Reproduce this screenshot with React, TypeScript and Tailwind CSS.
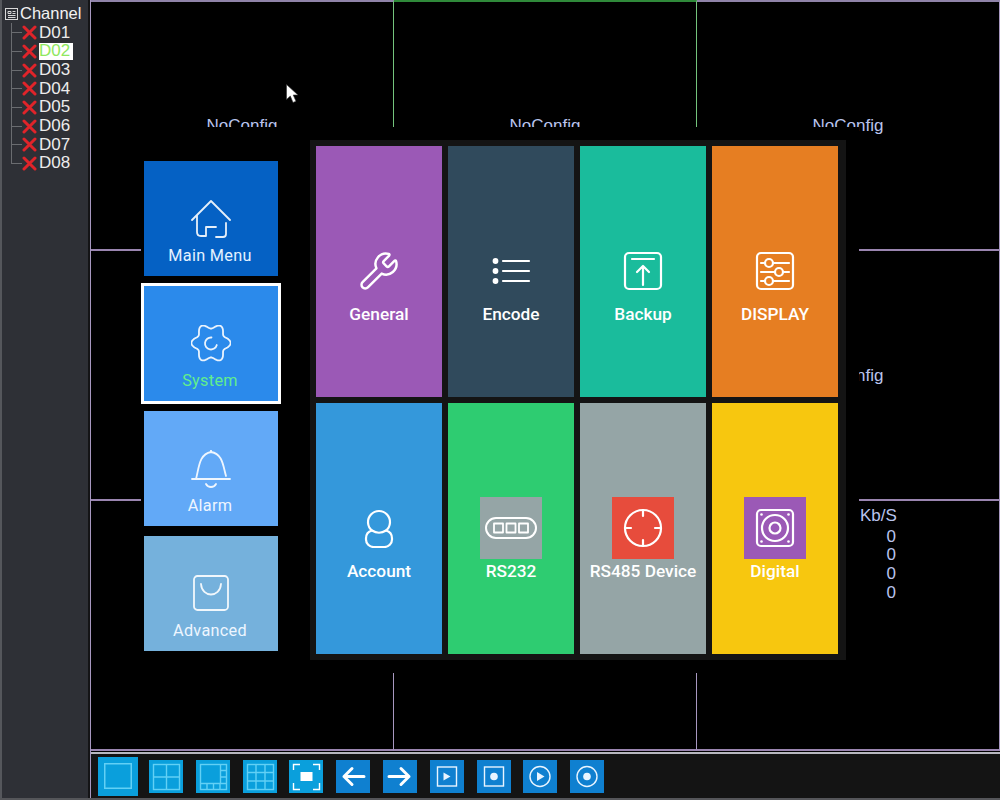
import { Wrench } from "lucide-react";
import type { ReactNode } from "react";

const channels = ["D01", "D02", "D03", "D04", "D05", "D06", "D07", "D08"];

const gearPoints = Array.from({ length: 120 }, (_, i) => {
  const a = (i / 120) * Math.PI * 2;
  const r = 17 + 2.6 * Math.cos(6 * a);
  return `${(20 + r * Math.cos(a)).toFixed(2)},${(18 + r * Math.sin(a)).toFixed(2)}`;
}).join(" ");

const Ico = ({ children, sw = 2.2 }: { children: ReactNode; sw?: number }) => (
  <svg width="40" height="40" viewBox="0 0 40 40" fill="none" stroke="currentColor" strokeWidth={sw} strokeLinecap="round" strokeLinejoin="round">
    {children}
  </svg>
);

const Box62 = ({ children }: { children: ReactNode }) => (
  <svg width="62" height="62" viewBox="0 0 62 62" fill="none" stroke="currentColor" strokeWidth="2.2" strokeLinecap="round" strokeLinejoin="round">
    {children}
  </svg>
);

const sideTiles = [
  {
    label: "Main Menu",
    bg: "bg-[#0561c4]",
    border: "border-transparent",
    text: "text-[#e4f2ff]",
    icon: (
      <Ico sw={1.8}>
        <path d="M1 20 20 1l19 19M6 15v17q0 4 4 4h5V27h10M25 37h7q3 0 3-3V23" />
      </Ico>
    ),
  },
  {
    label: "System",
    bg: "bg-[#2b8aeb]",
    border: "border-white",
    text: "text-[#62ee8c]",
    icon: (
      <Ico sw={1.8}>
        <polygon points={gearPoints} />
        <path d="M20.500 12.500a6 6 0 1 0 5.300 7.500" />
      </Ico>
    ),
  },
  {
    label: "Alarm",
    bg: "bg-[#62a9f7]",
    border: "border-transparent",
    text: "text-[#eef6ff]",
    icon: (
      <Ico sw={1.8}>
        <path d="M1 29h38M5 29C8 18 8 4 20 2c12 2 12 14 15 24M20 0v2M15 34c2 4 8 4 10 0" />
      </Ico>
    ),
  },
  {
    label: "Advanced",
    bg: "bg-[#75b1dc]",
    border: "border-transparent",
    text: "text-[#eef6ff]",
    icon: (
      <Ico sw={1.8}>
        <rect x="3" y="1" width="34" height="34" rx="3.500" />
        <path d="M10 9c1 14 19 14 20 0" />
      </Ico>
    ),
  },
];

const gridTiles = [
  {
    label: "General",
    bg: "bg-[#9b59b6]",
    icon: <Wrench size={42} strokeWidth={1.4} />,
  },
  {
    label: "Encode",
    bg: "bg-[#304a5c]",
    icon: (
      <Ico>
        <path d="M12 10h26M12 20h26M12 30h26" />
        <circle cx="4.500" cy="10" r="1.800" fill="currentColor" />
        <circle cx="4.500" cy="20" r="1.800" fill="currentColor" />
        <circle cx="4.500" cy="30" r="1.800" fill="currentColor" />
      </Ico>
    ),
  },
  {
    label: "Backup",
    bg: "bg-[#1abc9c]",
    icon: (
      <Ico>
        <rect x="2" y="2" width="36" height="36" rx="4" />
        <path d="M9 8h22M20 34V15M14 21l6-6 6 6" />
      </Ico>
    ),
  },
  {
    label: "DISPLAY",
    bg: "bg-[#e67e22]",
    icon: (
      <Ico>
        <rect x="2" y="2" width="36" height="36" rx="4" />
        <path d="M18 12h16M6 21h14M28 21h6M18 30h16" />
        <circle cx="14" cy="12" r="4" />
        <circle cx="24" cy="21" r="4" />
        <circle cx="14" cy="30" r="4" />
        <path d="M6 12h4M6 30h4" />
      </Ico>
    ),
  },
  {
    label: "Account",
    bg: "bg-[#3498db]",
    icon: (
      <Ico>
        <path d="M13 22.500a11 11 0 1 1 14 0" />
        <path d="M13 22.500q7 4.500 14 0 6 1.500 6 8v1a7.500 7.500 0 0 1-7.500 7.500h-11A7.500 7.500 0 0 1 7 31.500v-1q0-6.500 6-8z" />
      </Ico>
    ),
  },
  {
    label: "RS232",
    bg: "bg-[#2ecc71]",
    square: "bg-[#95a5a6]",
    icon: (
      <Box62>
        <rect x="6" y="21" width="50" height="20" rx="10" strokeWidth="2" />
        <rect x="14" y="26.500" width="9" height="9" strokeWidth="1.800" />
        <rect x="26.500" y="26.500" width="9" height="9" strokeWidth="1.800" />
        <rect x="39" y="26.500" width="9" height="9" strokeWidth="1.800" />
      </Box62>
    ),
  },
  {
    label: "RS485 Device",
    bg: "bg-[#95a5a6]",
    square: "bg-[#e74c3c]",
    icon: (
      <Box62>
        <circle cx="31" cy="31" r="18" />
        <path d="M31 13v6M31 43v6M13 31h6M43 31h6" />
      </Box62>
    ),
  },
  {
    label: "Digital",
    bg: "bg-[#f7c70f]",
    square: "bg-[#9b59b6]",
    icon: (
      <Box62>
        <rect x="13" y="13" width="36" height="36" rx="4" />
        <circle cx="31" cy="31" r="13" />
        <circle cx="31" cy="31" r="5.500" />
        <g fill="currentColor" stroke="none">
          <circle cx="17.500" cy="17.500" r="1.300" />
          <circle cx="44.500" cy="17.500" r="1.300" />
          <circle cx="17.500" cy="44.500" r="1.300" />
          <circle cx="44.500" cy="44.500" r="1.300" />
        </g>
      </Box62>
    ),
  },
];

const Tool = ({ children }: { children: ReactNode }) => (
  <svg width="34" height="33" viewBox="0 0 34 33" fill="none" stroke="currentColor" strokeWidth="1.400">
    {children}
  </svg>
);

const layoutTools = [
  <Tool key="2x2">
    <rect x="4.500" y="4.500" width="26" height="25" />
    <path d="M17.500 4.500v25M4.500 17h26" />
  </Tool>,
  <Tool key="1+7">
    <rect x="4.500" y="4.500" width="26" height="25" />
    <path d="M24.500 4.500v19M4.500 23.500h26M24.500 10.500h6M24.500 17h6M11 23.500v6M17.500 23.500v6M24 23.500v6" />
  </Tool>,
  <Tool key="3x3">
    <rect x="4.500" y="4.500" width="26" height="25" />
    <path d="M13 4.500v25M22 4.500v25M4.500 12.500h26M4.500 21h26" />
  </Tool>,
  <Tool key="full">
    <path d="M4.500 10V4.500H11M24 4.500h6.500V10M4.500 23v6.500H11M24 29.500h6.500V23" />
    <rect x="11.500" y="12" width="12" height="9" fill="currentColor" stroke="none" />
  </Tool>,
];

const playTools = [
  <Tool key="prev">
    <path d="M28 16.500H8M16 8.500l-8 8 8 8" stroke="white" strokeWidth="3" strokeLinecap="round" strokeLinejoin="round" />
  </Tool>,
  <Tool key="next">
    <path d="M6 16.500h20M18 8.500l8 8-8 8" stroke="white" strokeWidth="3" strokeLinecap="round" strokeLinejoin="round" />
  </Tool>,
  <Tool key="play-box">
    <rect x="7.500" y="7" width="19" height="19" />
    <path d="M13.500 12.500v8l7-4z" fill="currentColor" stroke="none" />
  </Tool>,
  <Tool key="rec-box">
    <rect x="7.500" y="7" width="19" height="19" />
    <circle cx="17" cy="16.500" r="3.800" fill="currentColor" stroke="none" />
  </Tool>,
  <Tool key="play-circle">
    <circle cx="17" cy="16.500" r="10" />
    <path d="M14 12v9l7.500-4.500z" fill="currentColor" stroke="none" />
  </Tool>,
  <Tool key="rec-circle">
    <circle cx="17" cy="16.500" r="10" />
    <circle cx="17" cy="16.500" r="3.800" fill="currentColor" stroke="none" />
  </Tool>,
];

const cellBorders = [
  "border-t-2 border-t-[#8f83a8] border-r border-r-[#74c47c] border-b-2 border-b-[#9a85b0]",
  "border-t-2 border-t-[#2f8a3a] border-r border-r-[#74c47c] border-b-2 border-b-[#2f8a3a]",
  "border-t-2 border-t-[#8f83a8] border-r border-r-[#a798c0] border-b-2 border-b-[#9a85b0]",
];

const App = () => {
  return (
    <div className="relative flex h-[800px] w-[1000px] overflow-hidden bg-[#55565a] font-['Liberation_Sans',sans-serif] text-white">
      <aside className="h-[798px] w-[90px] border-x-2 border-l-[#55575c] border-r-[#141416] bg-[#2e3036] pl-[3px] pt-[4px]">
        <div className="flex h-[19px] items-center text-[16.500px] leading-[19px] text-[#f2f2f2]">
          <svg width="14" height="14" viewBox="0 0 14 14" fill="none" stroke="#d8d8d8" className="mr-[1px]">
            <rect x="0.500" y="1.500" width="12" height="11" />
            <path d="M3 4.500h3v2H3zM7.500 4.500h3M7.500 6.500h3M3 8.500h7.500M3 10.500h7.500" />
          </svg>
          Channel
        </div>
        <ul className="mt-[0.3px] pl-[6px]">
          {channels.map((ch, i) => (
            <li key={ch} className="flex h-[18.700px] items-center text-[17px] leading-[18px] text-[#ececec]">
              <div
                className={
                  i === channels.length - 1
                    ? "h-[10px] w-[11px] self-start border-b border-l border-[#6a6c70]"
                    : "flex w-[11px] items-center self-stretch border-l border-[#6a6c70]"
                }
              >
                {i !== channels.length - 1 && <div className="h-px w-full bg-[#6a6c70]" />}
              </div>
              <svg width="15" height="15" viewBox="0 0 15 15" stroke="#e0242a" strokeWidth="3" strokeLinecap="round" className="shrink-0">
                <path d="M2 2l11 11M13 2 2 13" />
              </svg>
              <span className={ch === "D02" ? "ml-[2px] flex h-[17px] w-[34px] items-center bg-white text-[#8fe860]" : "ml-[2px]"}>
                {ch}
              </span>
            </li>
          ))}
        </ul>
      </aside>

      <main className="flex h-[798px] w-[910px] flex-col border-l border-[#a798c0] bg-black">
        <div className="grid h-[751px] grid-cols-3 grid-rows-[251px_250px_250px]">
          {[0, 1, 2].map((row) =>
            [0, 1, 2].map((col) => (
              <div
                key={`${row}-${col}`}
                className={`flex items-center justify-center text-[17px] text-[#b9c4ee] ${
                  row === 0 ? cellBorders[col] : "border-r border-b-2 border-r-[#a798c0] border-b-[#9a85b0] pt-[2px]"
                }`}
              >
                {(row === 0 || (row === 1 && col === 2)) && "NoConfig"}
              </div>
            ))
          )}
        </div>
        <div className="mt-px h-[2px] bg-[#b8b8c0]" />
        <div className="flex h-[44px] items-center bg-[#141414] pl-[7px]">
          <button className="mr-[11px] flex h-[39px] w-[40px] items-center justify-center bg-[#0a9fdc] text-[#62d0f5]">
            <svg width="28" height="26" viewBox="0 0 28 26" fill="none" stroke="currentColor" strokeWidth="1.500">
              <rect x="0.750" y="0.750" width="26.500" height="24.500" />
            </svg>
          </button>
          <div className="flex gap-[12.800px]">
            {layoutTools.map((t, i) => (
              <button key={i} className={`h-[33px] w-[34px] bg-[#0a9fdc] ${i === 3 ? "text-white" : "text-[#62d0f5]"}`}>
                {t}
              </button>
            ))}
            {playTools.map((t, i) => (
              <button key={i} className="h-[33px] w-[34px] bg-[#0f80d0] text-[#e8f4ff]">
                {t}
              </button>
            ))}
          </div>
        </div>
      </main>

      <svg width="14" height="20" viewBox="0 0 14 20" className="absolute left-[286px] top-[84px]">
        <path d="M0.500 0.500v15l3.800-3.500 2.700 6.500 3-1.300-2.800-6.200H12z" fill="white" stroke="#333" strokeWidth="0.600" />
      </svg>

      <div className="absolute left-[860px] top-[507px] w-[36px] text-right text-[17px] leading-[18.700px] text-[#b9c4ee]">
        <div className="mb-[2px] text-left">Kb/S</div>
        <div>0</div>
        <div>0</div>
        <div>0</div>
        <div>0</div>
      </div>

      <div className="absolute left-[141px] top-[127px] flex h-[546px] w-[718px] bg-black font-['Roboto',sans-serif]">
        <div className="flex flex-col gap-[4px] pt-[31px]">
          {sideTiles.map((t) => (
            <div key={t.label} className={`h-[121px] w-[140px] border-[3px] ${t.border}`}>
              <div className={`flex h-full flex-col items-center pt-[39px] ${t.bg} ${t.text}`}>
                <div className="text-white/90">{t.icon}</div>
                <div className="-translate-x-px text-[16.250px] leading-[32px] tracking-[0.3px]">{t.label}</div>
              </div>
            </div>
          ))}
        </div>
        <div className="ml-[29px] mt-[13px] grid h-[520px] w-[536px] grid-cols-[repeat(4,126px)] grid-rows-[251px_251px] gap-[6px] bg-[#141414] pl-[6px] pt-[6px]">
          {gridTiles.map((t) => (
            <div key={t.label} className={`flex flex-col items-center pt-[94px] text-white ${t.bg}`}>
              <div className={`flex h-[62px] w-[62px] items-center justify-center ${t.square ?? ""}`}>{t.icon}</div>
              <div className="whitespace-nowrap text-[17.250px] font-medium leading-[24px]">{t.label}</div>
            </div>
          ))}
        </div>
      </div>
    </div>
  );
};

export default App;
